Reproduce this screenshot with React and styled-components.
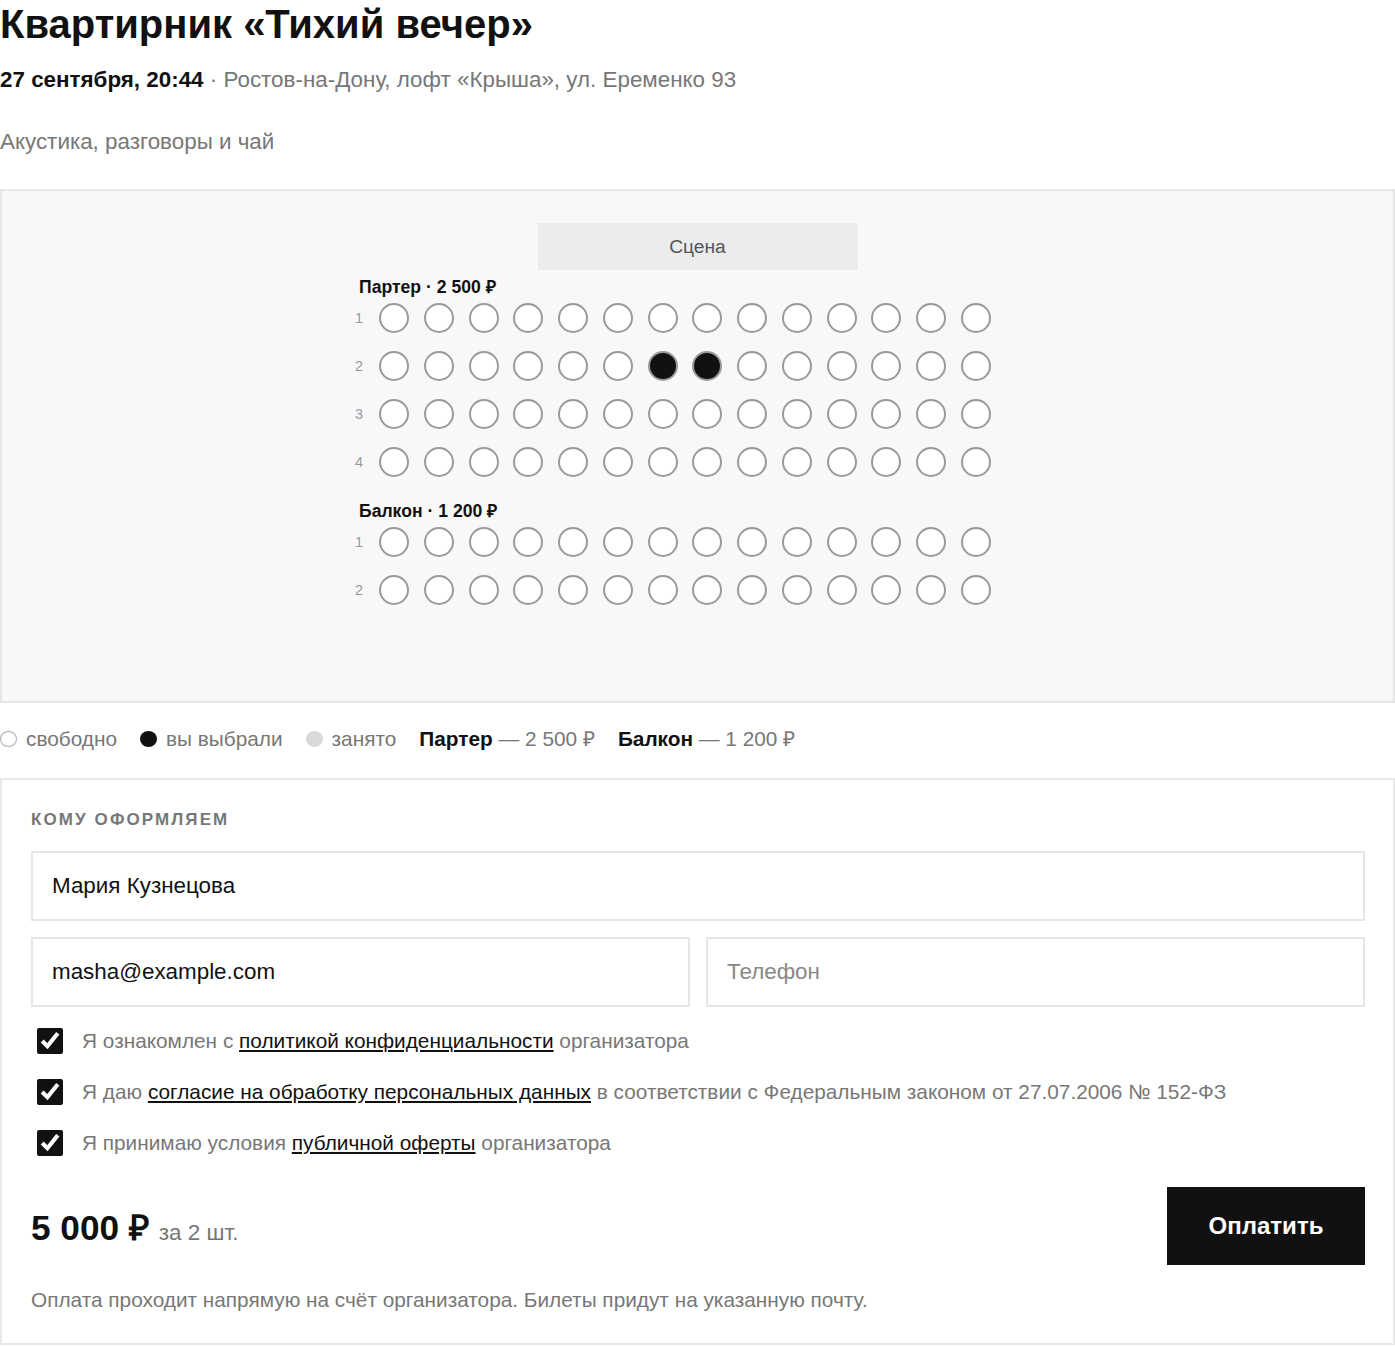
import React, { useState } from 'react'
import styled, { createGlobalStyle } from 'styled-components'

const GlobalStyle = createGlobalStyle`
  body {
    margin: 0;
    background: #fff;
    font-family: "Liberation Sans", Arial, sans-serif;
    color: #111;
  }
  * { box-sizing: border-box; }
`

const sections = [
  { name: 'Партер', price: '2 500 ₽', rows: 4 },
  { name: 'Балкон', price: '1 200 ₽', rows: 2 },
]

const SEATS_PER_ROW = 14

export default function App() {
  const [selected, setSelected] = useState(['Партер-2-7', 'Партер-2-8'])
  const [checks, setChecks] = useState([true, true, true])
  const [name, setName] = useState('Мария Кузнецова')
  const [email, setEmail] = useState('masha@example.com')
  const [phone, setPhone] = useState('')

  const toggleSeat = (id) => {
    setSelected((s) => (s.includes(id) ? s.filter((x) => x !== id) : [...s, id]))
  }

  const toggleCheck = (i) => {
    setChecks((c) => c.map((v, j) => (j === i ? !v : v)))
  }

  return (
    <>
      <GlobalStyle />
      <Page>
        <Title>Квартирник «Тихий вечер»</Title>
        <Meta>
          <b>27 сентября, 20:44</b> · Ростов-на-Дону, лофт «Крыша», ул. Еременко 93
        </Meta>
        <Description>Акустика, разговоры и чай</Description>

        <Hall>
          <Stage>Сцена</Stage>
          <SeatMap>
            {sections.map((sec) => (
              <Section key={sec.name}>
                <SectionLabel>
                  {sec.name} · {sec.price}
                </SectionLabel>
                {Array.from({ length: sec.rows }).map((_, r) => (
                  <SeatRow key={r}>
                    <RowNum>{r + 1}</RowNum>
                    <Seats>
                      {Array.from({ length: SEATS_PER_ROW }).map((_, s) => {
                        const id = `${sec.name}-${r + 1}-${s + 1}`
                        return (
                          <Seat
                            key={id}
                            $selected={selected.includes(id)}
                            onClick={() => toggleSeat(id)}
                          />
                        )
                      })}
                    </Seats>
                  </SeatRow>
                ))}
              </Section>
            ))}
          </SeatMap>
        </Hall>

        <Legend>
          <LegendItem>
            <Dot $kind="free" />
            свободно
          </LegendItem>
          <LegendItem>
            <Dot $kind="selected" />
            вы выбрали
          </LegendItem>
          <LegendItem>
            <Dot $kind="taken" />
            занято
          </LegendItem>
          <LegendPrice>
            <b>Партер</b> — 2 500 ₽
          </LegendPrice>
          <LegendPrice>
            <b>Балкон</b> — 1 200 ₽
          </LegendPrice>
        </Legend>

        <FormCard>
          <FormHeading>Кому оформляем</FormHeading>
          <Fields>
            <Input value={name} onChange={(e) => setName(e.target.value)} />
            <FieldRow>
              <Input value={email} onChange={(e) => setEmail(e.target.value)} />
              <Input
                placeholder="Телефон"
                value={phone}
                onChange={(e) => setPhone(e.target.value)}
              />
            </FieldRow>
          </Fields>

          <Agreements>
            <CheckRow>
              <CheckBox type="checkbox" checked={checks[0]} onChange={() => toggleCheck(0)} />
              <span>
                Я ознакомлен с <TextLink href="#">политикой конфиденциальности</TextLink> организатора
              </span>
            </CheckRow>
            <CheckRow>
              <CheckBox type="checkbox" checked={checks[1]} onChange={() => toggleCheck(1)} />
              <span>
                Я даю <TextLink href="#">согласие на обработку персональных данных</TextLink> в
                соответствии с Федеральным законом от 27.07.2006 № 152-ФЗ
              </span>
            </CheckRow>
            <CheckRow>
              <CheckBox type="checkbox" checked={checks[2]} onChange={() => toggleCheck(2)} />
              <span>
                Я принимаю условия <TextLink href="#">публичной оферты</TextLink> организатора
              </span>
            </CheckRow>
          </Agreements>

          <PayRow>
            <Total>
              <Amount>5 000 ₽</Amount>
              <Count>за 2 шт.</Count>
            </Total>
            <PayButton>Оплатить</PayButton>
          </PayRow>

          <Note>Оплата проходит напрямую на счёт организатора. Билеты придут на указанную почту.</Note>
        </FormCard>
      </Page>
    </>
  )
}

const Page = styled.div`
  width: 1395px;
`

const Title = styled.h1`
  margin: 0;
  font-size: 40px;
  line-height: 48px;
  font-weight: 700;
  color: #111;
`

const Meta = styled.div`
  margin-top: 18px;
  font-size: 22.4px;
  line-height: 28px;
  color: #777;
  b {
    color: #111;
  }
`

const Description = styled.p`
  margin: 34px 0 0;
  font-size: 22.4px;
  line-height: 28px;
  color: #777;
`

const Hall = styled.div`
  margin-top: 33px;
  background: #f8f8f8;
  border: 2px solid #e6e6e6;
  padding: 32px 0 96px;
  display: flex;
  flex-direction: column;
  align-items: center;
`

const Stage = styled.div`
  width: 320px;
  height: 47px;
  background: #ececec;
  color: #555;
  font-size: 19.2px;
  display: flex;
  align-items: center;
  justify-content: center;
`

const SeatMap = styled.div`
  width: 695px;
  margin-top: 7px;
  display: flex;
  flex-direction: column;
  gap: 24px;
`

const Section = styled.div`
  display: flex;
  flex-direction: column;
  gap: 18px;
`

const SectionLabel = styled.div`
  padding-left: 9px;
  font-size: 17.6px;
  line-height: 20px;
  font-weight: 700;
  color: #111;
  margin-bottom: -12px;
`

const SeatRow = styled.div`
  display: flex;
  align-items: center;
`

const RowNum = styled.div`
  width: 18px;
  margin-right: 11px;
  text-align: center;
  font-size: 14.4px;
  color: #999;
`

const Seats = styled.div`
  display: flex;
  gap: 14.77px;
`

const Seat = styled.button`
  width: 30px;
  height: 30px;
  padding: 0;
  border-radius: 50%;
  border: 2px solid #9a9a9a;
  background: ${(p) => (p.$selected ? '#111' : '#fff')};
  cursor: pointer;
`

const Legend = styled.div`
  margin-top: 24px;
  display: flex;
  align-items: center;
  gap: 23px;
  font-size: 20.8px;
  line-height: 24px;
  color: #777;
`

const LegendItem = styled.div`
  display: flex;
  align-items: center;
  gap: 9px;
`

const LegendPrice = styled.div`
  b {
    color: #111;
  }
`

const Dot = styled.span`
  width: 17px;
  height: 16px;
  border-radius: 50%;
  flex-shrink: 0;
  background: ${(p) =>
    p.$kind === 'selected' ? '#111' : p.$kind === 'taken' ? '#d9d9d9' : '#fff'};
  border: ${(p) => (p.$kind === 'free' ? '1.5px solid #aaa' : 'none')};
`

const FormCard = styled.div`
  margin-top: 27px;
  border: 2px solid #e8e8e8;
  padding: 30px 28px 32px 29px;
`

const FormHeading = styled.div`
  font-size: 17px;
  line-height: 20px;
  font-weight: 700;
  letter-spacing: 2.1px;
  text-transform: uppercase;
  color: #777;
`

const Fields = styled.div`
  margin-top: 21px;
  display: flex;
  flex-direction: column;
  gap: 16px;
`

const FieldRow = styled.div`
  display: grid;
  grid-template-columns: 1fr 1fr;
  gap: 16px;
`

const Input = styled.input`
  width: 100%;
  height: 70px;
  border: 2px solid #e6e6e6;
  border-radius: 0;
  padding: 0 19px;
  font-family: inherit;
  font-size: 22.4px;
  color: #111;
  background: #fff;
  outline: none;
  &::placeholder {
    color: #888;
  }
`

const Agreements = styled.div`
  margin-top: 21px;
  display: flex;
  flex-direction: column;
  gap: 25px;
`

const CheckRow = styled.label`
  display: flex;
  align-items: center;
  gap: 19px;
  min-height: 26px;
  font-size: 20.8px;
  line-height: 26px;
  color: #777;
`

const CheckBox = styled.input`
  width: 26px;
  height: 26px;
  margin: 0 0 0 6px;
  accent-color: #111;
  flex-shrink: 0;
`

const TextLink = styled.a`
  color: #111;
  text-decoration: underline;
`

const PayRow = styled.div`
  margin-top: 31px;
  display: flex;
  align-items: center;
  justify-content: space-between;
`

const Total = styled.div`
  display: flex;
  align-items: baseline;
  gap: 10px;
`

const Amount = styled.span`
  font-size: 35.2px;
  font-weight: 700;
  color: #111;
`

const Count = styled.span`
  font-size: 22.4px;
  color: #777;
`

const PayButton = styled.button`
  width: 198px;
  height: 78px;
  border: none;
  background: #111;
  color: #fff;
  font-family: inherit;
  font-size: 24px;
  font-weight: 700;
  cursor: pointer;
`

const Note = styled.p`
  margin: 24px 0 0;
  font-size: 20.8px;
  line-height: 22px;
  color: #777;
`
